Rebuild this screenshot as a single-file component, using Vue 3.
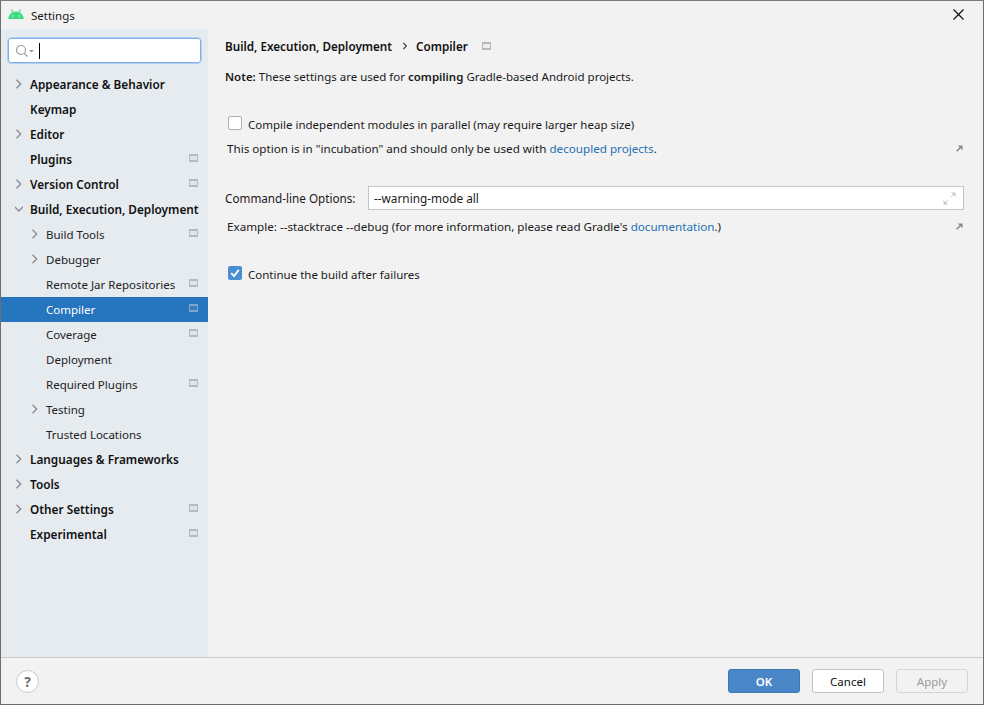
<script setup>
const rows = [
  { t: 'Appearance & Behavior', lvl: 0, arrow: 'r' },
  { t: 'Keymap', lvl: 0 },
  { t: 'Editor', lvl: 0, arrow: 'r' },
  { t: 'Plugins', lvl: 0, mark: true },
  { t: 'Version Control', lvl: 0, arrow: 'r', mark: true },
  { t: 'Build, Execution, Deployment', lvl: 0, arrow: 'd' },
  { t: 'Build Tools', lvl: 1, arrow: 'r', mark: true },
  { t: 'Debugger', lvl: 1, arrow: 'r' },
  { t: 'Remote Jar Repositories', lvl: 1, mark: true },
  { t: 'Compiler', lvl: 1, mark: true, sel: true },
  { t: 'Coverage', lvl: 1, mark: true },
  { t: 'Deployment', lvl: 1 },
  { t: 'Required Plugins', lvl: 1, mark: true },
  { t: 'Testing', lvl: 1, arrow: 'r' },
  { t: 'Trusted Locations', lvl: 1 },
  { t: 'Languages & Frameworks', lvl: 0, arrow: 'r' },
  { t: 'Tools', lvl: 0, arrow: 'r' },
  { t: 'Other Settings', lvl: 0, arrow: 'r', mark: true },
  { t: 'Experimental', lvl: 0, mark: true }
]
</script>

<template>
  <div class="win">
    <header class="titlebar">
      <svg class="droid" width="16" height="10" viewBox="0 0 16 10">
        <path d="M0.2 10 C0.6 5.6 3.6 2.6 8 2.6 C12.4 2.6 15.4 5.6 15.8 10 Z" fill="#3ddc84" />
        <path d="M3.4 0.4 L5 3.4 M12.6 0.4 L11 3.4" stroke="#3ddc84" stroke-width="1.1" fill="none" />
        <circle cx="4.8" cy="7" r="0.7" fill="#f2f2f2" />
        <circle cx="11.2" cy="7" r="0.7" fill="#f2f2f2" />
      </svg>
      <span class="title">Settings</span>
      <svg class="close" width="11" height="11" viewBox="0 0 11 11">
        <path d="M0.5 0.5 L10.5 10.5 M10.5 0.5 L0.5 10.5" stroke="#111" stroke-width="1.2" fill="none" />
      </svg>
    </header>

    <div class="body">
      <aside class="side">
        <div class="search">
          <svg width="20" height="14" viewBox="0 0 20 14">
            <circle cx="6" cy="6" r="4.5" fill="none" stroke="#9a9a9a" stroke-width="1.1" />
            <path d="M9.3 9.3 L12.6 12.6" stroke="#9a9a9a" stroke-width="1.3" />
            <path d="M14 6 L19 6 L16.5 8.6 Z" fill="#9a9a9a" />
          </svg>
          <span class="caret"></span>
        </div>
        <ul class="tree">
          <li v-for="r in rows" :key="r.t" class="row" :class="{ sel: r.sel, top: r.lvl === 0, sub: r.lvl === 1 }">
            <svg v-if="r.arrow" class="arrow" width="8" height="10" viewBox="0 0 8 10">
              <path v-if="r.arrow === 'r'" d="M1.5 0.8 L5.7 5 L1.5 9.2" fill="none" stroke="#868b90" stroke-width="1.3" />
              <path v-else d="M-0.4 2.8 L3.8 7 L8 2.8" fill="none" stroke="#868b90" stroke-width="1.3" />
            </svg>
            <span class="label">{{ r.t }}</span>
            <span v-if="r.mark" class="mark"></span>
          </li>
        </ul>
      </aside>

      <main class="main">
        <div class="crumbs">
          <span>Build, Execution, Deployment</span>
          <svg class="crumb-arrow" width="6" height="8" viewBox="0 0 6 8">
            <path d="M1.3 0.8 L4.4 4 L1.3 7.2" fill="none" stroke="#333" stroke-width="1.1" />
          </svg>
          <span>Compiler</span>
          <span class="mark crumb-mark"></span>
        </div>
        <p class="note"><b>Note:</b> These settings are used for <b>compiling</b> Gradle-based Android projects.</p>

        <label class="check first">
          <span class="box"></span>
          <span>Compile independent modules in parallel (may require larger heap size)</span>
        </label>
        <div class="hint first-hint">
          <span>This option is in "incubation" and should only be used with <a>decoupled projects</a>.</span>
          <svg class="ext" width="7" height="7" viewBox="0 0 8 8">
            <path d="M0.8 7.2 L5.4 2.6" stroke="#7f8b91" stroke-width="1.8" />
            <path d="M2 0.5 H7.5 V6 Z" fill="#7f8b91" />
          </svg>
        </div>

        <div class="cmd">
          <span class="cmd-label">Command-line Options:</span>
          <div class="field">
            <span class="field-text">--warning-mode all</span>
            <svg width="13" height="13" viewBox="0 0 13 13">
              <path d="M8 0.5 H12.5 V5 Z M0.5 8 V12.5 H5 Z" fill="#c2c7ca" />
              <path d="M11 2 L8 5 M2 11 L5 8" fill="none" stroke="#c2c7ca" stroke-width="1" />
            </svg>
          </div>
        </div>
        <div class="hint example">
          <span>Example: --stacktrace --debug (for more information, please read Gradle's <a>documentation</a>.)</span>
          <svg class="ext" width="7" height="7" viewBox="0 0 8 8">
            <path d="M0.8 7.2 L5.4 2.6" stroke="#7f8b91" stroke-width="1.8" />
            <path d="M2 0.5 H7.5 V6 Z" fill="#7f8b91" />
          </svg>
        </div>

        <label class="check second">
          <span class="box on">
            <svg width="14" height="14" viewBox="0 0 14 14">
              <path d="M3.2 7.2 L6 10 L10.8 3.8" fill="none" stroke="#fff" stroke-width="1.9" />
            </svg>
          </span>
          <span>Continue the build after failures</span>
        </label>
      </main>
    </div>

    <footer class="foot">
      <span class="help">?</span>
      <div class="btns">
        <button class="btn ok">OK</button>
        <button class="btn">Cancel</button>
        <button class="btn off">Apply</button>
      </div>
    </footer>
  </div>
</template>

<style>
html, body { margin: 0; padding: 0; }
</style>

<style scoped>
.win {
  width: 984px;
  height: 705px;
  box-sizing: border-box;
  border: 1px solid #6e6e6e;
  border-top-color: #7a7a7a;
  background: #f2f2f2;
  display: flex;
  flex-direction: column;
  font-family: "Noto Sans", "Noto Sans CJK KR", sans-serif;
  font-size: 11.5px;
  color: #1a1a1a;
  overflow: hidden;
}
.titlebar {
  height: 28px;
  flex: none;
  display: flex;
  align-items: center;
  padding-left: 7px;
  padding-right: 19px;
}
.droid { margin-top: -3px; }
.title { margin-left: 7px; margin-top: 1px; }
.close { margin-left: auto; margin-top: -1px; }
.body { flex: 1; display: flex; min-height: 0; }
.side {
  width: 207px;
  flex: none;
  background: #e6ebf0;
  padding-top: 9px;
  box-sizing: border-box;
}
.search {
  height: 25px;
  margin: 0 7px 0 7px;
  box-sizing: border-box;
  background: #fff;
  border: 1px solid #7eb0e8;
  outline: 1px solid #b5d0f0;
  border-radius: 3px;
  display: flex;
  align-items: center;
  padding-left: 6px;
}
.caret { width: 1px; height: 16px; background: #000; margin-left: 4px; }
.tree { list-style: none; margin: 9px 0 0; padding: 0; }
.row {
  height: 25px;
  display: flex;
  align-items: center;
  position: relative;
}
.row.top .label { padding-bottom: 2px; }
.row.top { padding-left: 29px; font-weight: 600; font-size: 11.8px; color: #111; }
.row.sub { padding-left: 45px; color: #222; }
.row.sel { background: #2675bf; color: #fff; }
.arrow { position: absolute; top: 7px; }
.top .arrow { left: 14px; }
.sub .arrow { left: 30px; }
.mark {
  width: 9px;
  height: 8px;
  box-sizing: border-box;
  border-style: solid;
  border-width: 2px 1px;
  border-color: #b3bcc3;
  background: #dfe4e8;
  margin-left: auto;
  margin-right: 10px;
  margin-top: -3px;
}
.sel .mark { border-color: #7ba6cf; background: #3a7cba; }
.main { flex: 1; padding: 0 19px 0 17px; min-width: 0; }
.crumbs {
  height: 17px;
  margin-top: 8px;
  display: flex;
  align-items: center;
  font-weight: 600;
  font-size: 11.7px;
  color: #111;
  gap: 8px;
}
.crumb-arrow { margin-left: 2px; }
.crumb-mark { margin-left: 6px; margin-right: 0; margin-top: 1px; border-color: #b6b9bc; background: #ebedef; }
.note { margin: 14px 0 0; height: 17px; line-height: 17px; }
.note b { font-weight: 600; }
.check { display: flex; align-items: center; gap: 6px; padding-left: 3px; height: 17px; }
.check.first { margin-top: 31px; }
.check.second { margin-top: 31px; }
.box {
  width: 14px;
  height: 14px;
  box-sizing: border-box;
  border: 1px solid #b0b0b0;
  border-radius: 2px;
  background: #fff;
  display: block;
  margin-top: -4px;
}
.box.on { border: none; background: #4a8fd2; }
.box svg { display: block; }
.hint { display: flex; align-items: center; justify-content: space-between; height: 17px; padding-left: 2px; font-size: 11.65px; }
.first-hint { margin-top: 7px; }
.example { margin-top: 8px; }
.ext { margin-right: 1px; }
a { color: #2470b3; }
.cmd { display: flex; align-items: center; margin-top: 29px; }
.cmd-label { width: 143px; flex: none; font-size: 11.7px; }
.field {
  flex: 1;
  height: 24px;
  box-sizing: border-box;
  background: #fff;
  border: 1px solid #c4c4c4;
  display: flex;
  align-items: center;
  justify-content: space-between;
  padding: 0 7px 0 5px;
}
.field-text { font-size: 11.8px; }
.foot {
  height: 47px;
  flex: none;
  box-sizing: border-box;
  border-top: 1px solid #c9c9c9;
  display: flex;
  align-items: center;
  justify-content: space-between;
  padding: 0 15px 0 15px;
}
.help {
  width: 23px;
  height: 23px;
  box-sizing: border-box;
  border: 1px solid #c9c9c9;
  border-radius: 50%;
  background: #fff;
  color: #6e6e6e;
  font-weight: 700;
  font-size: 14px;
  display: flex;
  align-items: center;
  justify-content: center;
}
.btns { display: flex; gap: 12px; }
.btn {
  width: 72px;
  height: 24px;
  box-sizing: border-box;
  border: 1px solid #c4c4c4;
  border-radius: 3px;
  background: #fff;
  font: inherit;
  color: #111;
  padding: 0;
}
.btn.ok { background: #4a87c8; border-color: #3f77b3; color: #fff; font-weight: 600; }
.btn.off { background: #f2f2f2; border-color: #d6d6d6; color: #9a9a9a; }
</style>
